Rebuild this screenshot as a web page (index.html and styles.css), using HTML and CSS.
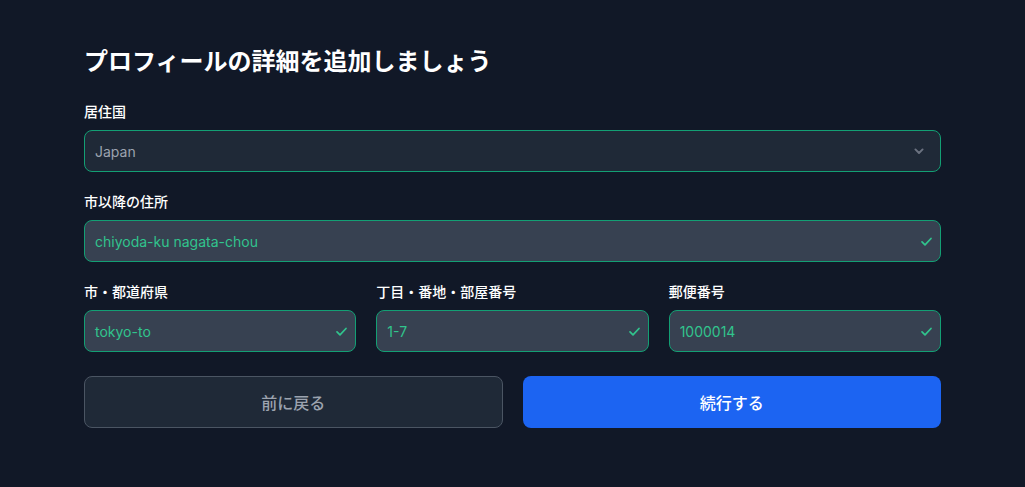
FILE: index.html
```html
<!DOCTYPE html>
<html lang="ja">
<head>
<meta charset="utf-8">
<title>プロフィール</title>
<link rel="stylesheet" href="styles.css">
</head>
<body>
<main class="page">
  <h1 class="title">プロフィールの詳細を追加しましょう</h1>
  <div class="field">
    <label class="label">居住国</label>
    <div class="control select">
      <span class="value muted">Japan</span>
      <svg class="icon chevron" viewBox="0 0 20 20" width="16" height="16"><path d="M5.5 8l4.5 4.5 4.5-4.5" fill="none" stroke="#6b7280" stroke-width="2.4" stroke-linecap="round" stroke-linejoin="round"/></svg>
    </div>
  </div>
  <div class="field">
    <label class="label">市以降の住所</label>
    <div class="control valid">
      <span class="value">chiyoda-ku nagata-chou</span>
      <svg class="icon" viewBox="0 0 20 20" width="15" height="15"><path d="M4 10.5l4 4 8-8.5" fill="none" stroke="#31c48d" stroke-width="2.3" stroke-linecap="round" stroke-linejoin="round"/></svg>
    </div>
  </div>
  <div class="row3">
    <div class="field">
      <label class="label">市・都道府県</label>
      <div class="control valid">
        <span class="value">tokyo-to</span>
        <svg class="icon" viewBox="0 0 20 20" width="15" height="15"><path d="M4 10.5l4 4 8-8.5" fill="none" stroke="#31c48d" stroke-width="2.3" stroke-linecap="round" stroke-linejoin="round"/></svg>
      </div>
    </div>
    <div class="field">
      <label class="label">丁目・番地・部屋番号</label>
      <div class="control valid">
        <span class="value">1-7</span>
        <svg class="icon" viewBox="0 0 20 20" width="15" height="15"><path d="M4 10.5l4 4 8-8.5" fill="none" stroke="#31c48d" stroke-width="2.3" stroke-linecap="round" stroke-linejoin="round"/></svg>
      </div>
    </div>
    <div class="field">
      <label class="label">郵便番号</label>
      <div class="control valid">
        <span class="value">1000014</span>
        <svg class="icon" viewBox="0 0 20 20" width="15" height="15"><path d="M4 10.5l4 4 8-8.5" fill="none" stroke="#31c48d" stroke-width="2.3" stroke-linecap="round" stroke-linejoin="round"/></svg>
      </div>
    </div>
  </div>
  <div class="buttons">
    <button class="btn btn-back">前に戻る</button>
    <button class="btn btn-next">続行する</button>
  </div>
</main>
</body>
</html>
```
FILE: styles.css
```css
html, body {
  margin: 0;
  padding: 0;
  background: #111827;
  font-family: Inter, "Noto Sans CJK JP", sans-serif;
  color: #ffffff;
}
.page {
  width: 857px;
  padding: 46px 0 0 84px;
  box-sizing: content-box;
}
.title {
  margin: 0 0 24px;
  font-size: 24px;
  line-height: 32px;
  font-weight: 700;
}
.field {
  display: flex;
  flex-direction: column;
  margin-bottom: 20px;
}
.label {
  font-size: 14px;
  line-height: 20px;
  font-weight: 500;
  margin-bottom: 8px;
  color: #ffffff;
}
.control {
  height: 42px;
  box-sizing: border-box;
  border: 1px solid #139f74;
  border-radius: 8px;
  display: flex;
  align-items: center;
  justify-content: space-between;
  padding: 0 6px 0 10px;
  background: #374151;
}
.select {
  background: #1f2937;
  padding-right: 13px;
}
.value {
  font-size: 14px;
  color: #31c48d;
}
.value.muted {
  color: #9ca3af;
}
.icon {
  flex: none;
}
.row3 {
  display: grid;
  grid-template-columns: 1fr 1fr 1fr;
  column-gap: 20px;
}
.row3 .field {
  margin-bottom: 24px;
}
.buttons {
  display: grid;
  grid-template-columns: 1fr 1fr;
  column-gap: 20px;
}
.btn {
  height: 52px;
  border-radius: 8px;
  font-family: inherit;
  font-size: 16px;
  font-weight: 500;
  cursor: pointer;
}
.btn-back {
  background: #1f2937;
  border: 1px solid #4b5563;
  color: #9ca3af;
}
.btn-next {
  background: #1c64f2;
  border: none;
  color: #ffffff;
}
```
